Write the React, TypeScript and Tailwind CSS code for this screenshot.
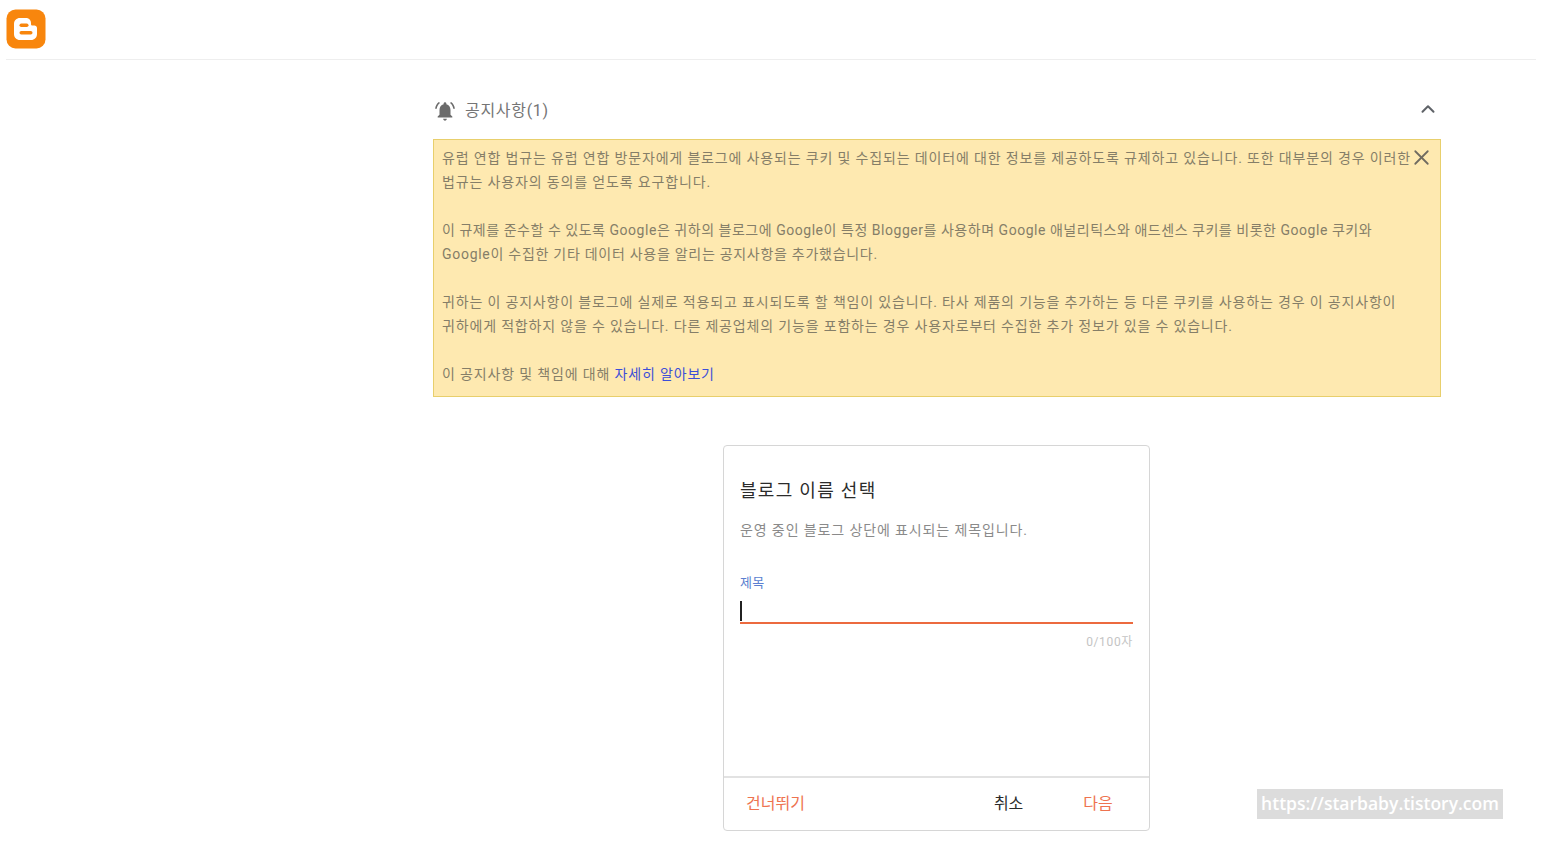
import { ChevronUp, X } from "lucide-react";

const fontStack = "font-['Roboto','Noto_Sans_CJK_KR',sans-serif]";

function BloggerLogo() {
  return (
    <svg width="40" height="40" viewBox="0 0 40 40" className="block">
      <rect x="0.5" y="0.5" width="39" height="39" rx="9" fill="#f8860d" />
      <path
        d="M14 9h6c3 0 5 2.200 5 5v1c0 1 .6 1.500 1.500 1.500h2c1.200 0 2.500 1 2.500 2.500V25c0 3.500-2.500 6-6 6H14c-3.500 0-6-2.500-6-6V15c0-3.500 2.500-6 6-6z"
        fill="#fff"
      />
      <rect x="13.500" y="14.500" width="9" height="3.500" rx="1.750" fill="#f8860d" />
      <rect x="13.500" y="22" width="13" height="3.500" rx="1.750" fill="#f8860d" />
    </svg>
  );
}

function BellIcon() {
  return (
    <svg width="22" height="22" viewBox="0 0 24 24" fill="#6b6b6b" className="block">
      <path d="M12 2.500c-.8 0-1.500.7-1.500 1.500v.6C7.600 5.300 6 7.800 6 10.800V16l-2 2v1h16v-1l-2-2v-5.200c0-3-1.600-5.500-4.500-6.200V4c0-.8-.7-1.500-1.500-1.500z" />
      <path d="M10 20.500h4c0 1.100-.9 2-2 2s-2-.9-2-2z" />
      <path d="M6.600 3.400 5.300 2.100C3 3.900 1.500 6.500 1.200 9.500H3c.3-2.500 1.600-4.700 3.600-6.100z" />
      <path d="M21 9.500h1.800c-.3-3-1.800-5.600-4.100-7.400l-1.300 1.300c2 1.400 3.300 3.600 3.600 6.100z" />
    </svg>
  );
}

export default function App() {
  return (
    <div className={`relative h-[859px] w-[1543px] overflow-hidden bg-white ${fontStack}`}>
      {/* Header */}
      <div className="ml-[6px] flex h-[60px] w-[1530px] items-start border-b border-[#eeeeee] pt-[9px]">
        <BloggerLogo />
      </div>

      <div className="ml-[433px] w-[1008px]">
        {/* Notice heading */}
        <div className="flex h-[79px] items-start justify-between pt-[38px]">
          <div className="flex items-center gap-[9px] pl-px text-[16px] leading-[24px] text-[#757575]">
            <BellIcon />
            <span className="mt-[1px] tracking-[0.7px]">공지사항(1)</span>
          </div>
          <ChevronUp size={22} strokeWidth={2.2} className="mr-[2px] text-[#5f6368]" />
        </div>

        {/* Notice box */}
        <div className="relative h-[258px] whitespace-nowrap border border-[#e8cf6c] bg-[#fee9b0] pl-[8px] pt-[6px] text-[14px] leading-[24px] text-[#857e68]">
          <X size={25} strokeWidth={1.7} className="absolute right-[6px] top-[5px] text-[#6f6b60]" />
          <p className="tracking-[0.84px]">유럽 연합 법규는 유럽 연합 방문자에게 블로그에 사용되는 쿠키 및 수집되는 데이터에 대한 정보를 제공하도록 규제하고 있습니다. 또한 대부분의 경우 이러한</p>
          <p className="tracking-[0.85px]">법규는 사용자의 동의를 얻도록 요구합니다.</p>
          <p className="mt-[24px] tracking-[0.53px]">이 규제를 준수할 수 있도록 Google은 귀하의 블로그에 Google이 특정 Blogger를 사용하며 Google 애널리틱스와 애드센스 쿠키를 비롯한 Google 쿠키와</p>
          <p className="tracking-[0.72px]">Google이 수집한 기타 데이터 사용을 알리는 공지사항을 추가했습니다.</p>
          <p className="mt-[24px] tracking-[0.83px]">귀하는 이 공지사항이 블로그에 실제로 적용되고 표시되도록 할 책임이 있습니다. 타사 제품의 기능을 추가하는 등 다른 쿠키를 사용하는 경우 이 공지사항이</p>
          <p className="tracking-[0.83px]">귀하에게 적합하지 않을 수 있습니다. 다른 제공업체의 기능을 포함하는 경우 사용자로부터 수집한 추가 정보가 있을 수 있습니다.</p>
          <p className="mt-[24px] tracking-[0.84px]">
            이 공지사항 및 책임에 대해 <span className="text-[#3c4fd8]">자세히 알아보기</span>
          </p>
        </div>

        {/* Dialog card */}
        <div className="ml-[290px] mt-[48px] flex h-[386px] w-[427px] flex-col rounded-[4px] border border-[#d6d6d6] bg-white">
          <div className="flex-1 pl-[16px] pt-[32px]">
            <h2 className="text-[18px] leading-[26px] tracking-[1.3px] text-[#2b2b2b]">블로그 이름 선택</h2>
            <p className="mt-[16px] text-[14px] leading-[20px] tracking-[0.88px] text-[#8a8a8a]">운영 중인 블로그 상단에 표시되는 제목입니다.</p>
            <label className="mt-[33px] block text-[13px] leading-[20px] tracking-[0.3px] text-[#5b7fd0]">제목</label>
            <div className="mt-[5px] flex h-[26px] w-[393px] items-start border-b-2 border-[#ec6a3f]">
              <div className="mt-[3px] h-[20px] w-[2px] bg-[#212121]" />
            </div>
            <p className="mt-[10px] w-[393px] text-right text-[12px] leading-[16px] tracking-[0.65px] text-[#c4c4c4]">0/100자</p>
          </div>
          <div className="flex h-[54px] items-center border-t-2 border-[#e2e2e2] pl-[22px] text-[16px]">
            <button type="button" className="text-[#ee7350]">건너뛰기</button>
            <button type="button" className="ml-[189px] text-[#2b2b2b]">취소</button>
            <button type="button" className="ml-[60px] text-[#ee7350]">다음</button>
          </div>
        </div>
      </div>

      {/* Watermark */}
      <div className="absolute left-[1257px] top-[789px] flex h-[30px] w-[246px] items-center justify-center whitespace-nowrap bg-[#dcdcdc] pb-[2px] font-['Open_Sans',sans-serif] text-[17.5px] font-semibold text-white">
        https://starbaby.tistory.com
      </div>
    </div>
  );
}
